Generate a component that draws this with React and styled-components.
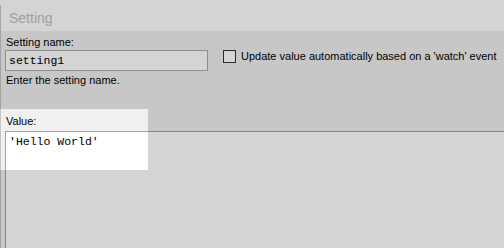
import styled, { createGlobalStyle } from "styled-components";

const Global = createGlobalStyle`
  html, body { margin: 0; padding: 0; }
  body {
    width: 504px;
    height: 248px;
    overflow: hidden;
    background: #ffffff;
    font-family: "Liberation Sans", Arial, sans-serif;
  }
`;

const Page = styled.div`
  position: relative;
  width: 504px;
  height: 248px;
  display: flex;
  flex-direction: column;
  overflow: hidden;
`;

// bottom of a label from the dialog behind, cut by the window edge
const TopStrip = styled.div`
  height: 5px;
  overflow: hidden;
  padding-left: 7px;
  background: #ffffff;
`;

const CutText = styled.div`
  margin-top: -11px;
  font-size: 13px;
  line-height: 14px;
  color: #222;
`;

const Window = styled.div`
  flex: 1;
  display: flex;
  flex-direction: column;
  border-left: 1px solid #c4c4c4;
`;

const TitleBar = styled.div`
  height: 26px;
  display: flex;
  align-items: center;
  padding-left: 8px;
  background: #ffffff;
  color: #c0c0c0;
  font-size: 14px;
`;

const Panel = styled.div`
  flex: 1;
  display: flex;
  flex-direction: column;
  background: #f0f0f0;
  padding: 4px 0 0 4px;
  font-size: 11px;
  color: #000;
`;

const NameRow = styled.div`
  display: flex;
  align-items: flex-start;
  gap: 15px;
`;

const Field = styled.div`
  display: flex;
  flex-direction: column;
`;

const Label = styled.div`
  line-height: 15px;
  height: 15px;
  padding-left: 1px;
`;

const TextBox = styled.div`
  width: 198px;
  height: 19px;
  border: 1px solid #acacac;
  background: #ffffff;
  font-family: "Liberation Mono", "Courier New", monospace;
  font-size: 11.5px;
  line-height: 19px;
  padding-left: 3px;
  box-sizing: content-box;
`;

const Hint = styled.div`
  line-height: 15px;
  margin-top: 2px;
  padding-left: 1px;
`;

const CheckLabel = styled.label`
  display: flex;
  align-items: center;
  gap: 5px;
  margin-top: 15px;
  line-height: 13px;
  white-space: nowrap;
`;

const Box = styled.span`
  width: 11px;
  height: 11px;
  border: 1px solid #333;
  background: #ffffff;
  flex: none;
`;

const ValueLabel = styled(Label)`
  margin-top: 26px;
`;

const TextArea = styled.div`
  flex: 1;
  margin-top: 2px;
  margin-right: -4px;
  background: #ffffff;
  border-top: 1px solid #a0a0a0;
  border-left: 1px solid #a0a0a0;
  font-family: "Liberation Mono", "Courier New", monospace;
  font-size: 11.5px;
  line-height: 16px;
  padding: 2px 0 0 3px;
`;

const Spotlight = styled.div`
  position: absolute;
  left: 0;
  top: 109px;
  width: 148px;
  height: 61px;
  box-shadow: 0 0 0 1200px rgba(0, 0, 0, 0.17);
  pointer-events: none;
`;

export default function App() {
  return (
    <Page>
      <Global />
      <TopStrip>
        <CutText>Collection variables</CutText>
      </TopStrip>
      <Window>
        <TitleBar>Setting</TitleBar>
        <Panel>
          <NameRow>
            <Field>
              <Label>Setting name:</Label>
              <TextBox>setting1</TextBox>
              <Hint>Enter the setting name.</Hint>
            </Field>
            <CheckLabel>
              <Box />
              Update value automatically based on a 'watch' event
            </CheckLabel>
          </NameRow>
          <ValueLabel>Value:</ValueLabel>
          <TextArea>'Hello World'</TextArea>
        </Panel>
      </Window>
      <Spotlight />
    </Page>
  );
}
